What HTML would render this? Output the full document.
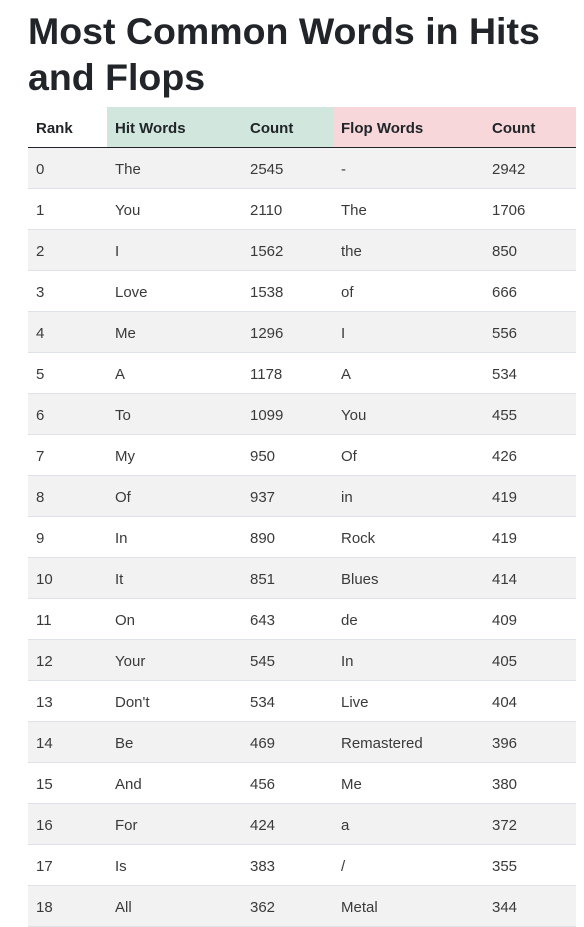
<!DOCTYPE html>
<html><head><meta charset="utf-8"><style>
body{margin:0;background:#fff;font-family:"Liberation Sans",sans-serif;color:#212529;}
h1{margin:0;position:absolute;left:28px;top:8px;font-size:37.5px;font-weight:bold;line-height:46px;width:560px;letter-spacing:0}
table{position:absolute;left:28px;top:107px;width:548px;border-collapse:collapse;font-size:15px}
th{height:40px;text-align:left;padding:3px 8px 0;font-weight:bold;font-size:15px;border-bottom:1px solid #212529;box-sizing:border-box}
td{height:41px;padding:4px 8px 0;border-bottom:1px solid #dee2e6;color:#3a3a3a;box-sizing:border-box}
tbody tr:nth-child(odd){background:#f2f2f2}
.g{background:#d1e7dd}.p{background:#f8d7da}
</style></head><body>
<h1>Most Common Words in Hits and Flops</h1>
<table>
<colgroup><col style="width:79px"><col style="width:135px"><col style="width:91px"><col style="width:151px"><col style="width:92px"></colgroup>
<thead><tr><th>Rank</th><th class="g">Hit Words</th><th class="g">Count</th><th class="p">Flop Words</th><th class="p">Count</th></tr></thead>
<tbody>
<tr><td>0</td><td>The</td><td>2545</td><td>-</td><td>2942</td></tr>
<tr><td>1</td><td>You</td><td>2110</td><td>The</td><td>1706</td></tr>
<tr><td>2</td><td>I</td><td>1562</td><td>the</td><td>850</td></tr>
<tr><td>3</td><td>Love</td><td>1538</td><td>of</td><td>666</td></tr>
<tr><td>4</td><td>Me</td><td>1296</td><td>I</td><td>556</td></tr>
<tr><td>5</td><td>A</td><td>1178</td><td>A</td><td>534</td></tr>
<tr><td>6</td><td>To</td><td>1099</td><td>You</td><td>455</td></tr>
<tr><td>7</td><td>My</td><td>950</td><td>Of</td><td>426</td></tr>
<tr><td>8</td><td>Of</td><td>937</td><td>in</td><td>419</td></tr>
<tr><td>9</td><td>In</td><td>890</td><td>Rock</td><td>419</td></tr>
<tr><td>10</td><td>It</td><td>851</td><td>Blues</td><td>414</td></tr>
<tr><td>11</td><td>On</td><td>643</td><td>de</td><td>409</td></tr>
<tr><td>12</td><td>Your</td><td>545</td><td>In</td><td>405</td></tr>
<tr><td>13</td><td>Don't</td><td>534</td><td>Live</td><td>404</td></tr>
<tr><td>14</td><td>Be</td><td>469</td><td>Remastered</td><td>396</td></tr>
<tr><td>15</td><td>And</td><td>456</td><td>Me</td><td>380</td></tr>
<tr><td>16</td><td>For</td><td>424</td><td>a</td><td>372</td></tr>
<tr><td>17</td><td>Is</td><td>383</td><td>/</td><td>355</td></tr>
<tr><td>18</td><td>All</td><td>362</td><td>Metal</td><td>344</td></tr>
</tbody></table>
</body></html>
